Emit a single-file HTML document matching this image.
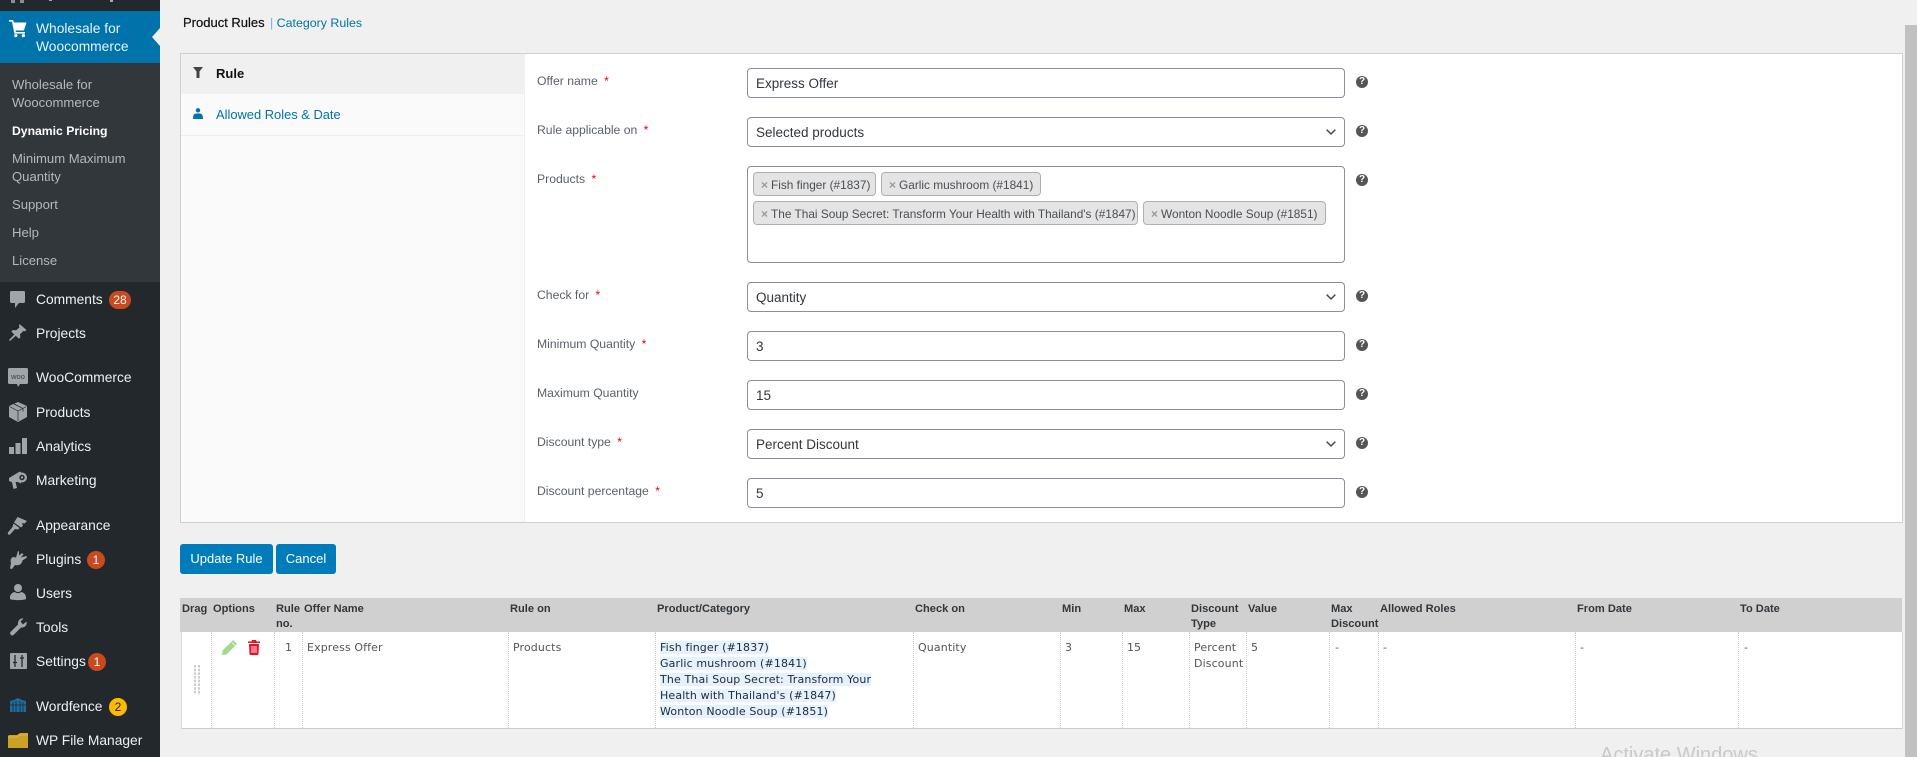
<!DOCTYPE html>
<html><head><meta charset="utf-8"><title>Dynamic Pricing</title>
<style>
html,body{margin:0;padding:0;width:1917px;height:757px;overflow:hidden;background:#f0f0f0}
body{position:relative;font-family:"Liberation Sans",sans-serif;font-size:13px;color:#3c434a}
.a{position:absolute;white-space:nowrap}
.m{position:absolute;left:36px;margin-top:1px;font-size:13.8px;line-height:20px;height:20px;color:#eef0f1;white-space:nowrap}
.s{position:absolute;left:12px;font-size:13.1px;line-height:18px;color:#b4b9be;white-space:nowrap}
svg{position:absolute;overflow:visible}
.b{position:absolute;height:18px;border-radius:9px;color:#fff;font-size:12px;line-height:18px;text-align:center;background:#ca4a1f}
.l{position:absolute;left:537px;font-size:12.2px;line-height:16px;color:#5a6168;white-space:nowrap}
.l i{font-style:normal;color:#e2001a;margin-left:3px}
.f{position:absolute;left:747px;width:596px;height:28px;border:1px solid #87919b;border-radius:4px;background:#fff;font-size:13.5px;line-height:30px;color:#32373c;text-indent:8px}
.h{position:absolute;left:1356px;width:12px;height:12px;border-radius:50%;background:#555;color:#fff;font-size:10px;font-weight:bold;line-height:12px;text-align:center}
.t{position:absolute;height:22px;border:1px solid #b0b0b0;border-radius:4px;background:#e4e4e4;font-size:11.85px;line-height:24px;color:#4a4f55;white-space:nowrap;box-sizing:content-box}
.t b{font-weight:bold;color:#999;margin:0 3px 0 7px;font-size:12px}
.th{position:absolute;top:602px;font-size:11.1px;line-height:15px;font-weight:bold;color:#32373c}
.td{position:absolute;top:640px;font-family:"DejaVu Sans",sans-serif;font-size:11px;line-height:16px;color:#555;white-space:nowrap}
.sep{position:absolute;top:632px;height:96px;width:0;border-left:1px dotted #ccc}
.hl{background:#e3f2fc;color:#1e2a38}
</style></head><body>

<div class="a" style="left:0;top:0;width:160px;height:757px;background:#23282d"></div>
<div class="a" style="left:0;top:63px;width:160px;height:219px;background:#32373c"></div>
<div class="a" style="left:0;top:11px;width:160px;height:52px;background:#0073aa"></div>
<svg style="left:152px;top:28px" width="8" height="18"><path d="M8 0 L0 9 L8 18Z" fill="#f0f0f1"/></svg>

<div class="a" style="left:11px;top:0;width:4px;height:3px;background:#8a8d90"></div>
<div class="a" style="left:20px;top:0;width:4px;height:3px;background:#8a8d90"></div>
<div class="a" style="left:49px;top:0;width:3px;height:1px;background:#aaa"></div>
<div class="a" style="left:110px;top:0;width:3px;height:2px;background:#aaa"></div>

<svg style="left:9px;top:19px" width="18" height="18" viewBox="0 0 18 18"><path d="M0 1h4l1 2.500h12.500l-2.600 8H6.500l.4 1.500H16v1.600H5.400L3 2.600H0z" fill="#fff"/><circle cx="6.800" cy="16.600" r="1.600" fill="#fff"/><circle cx="14.400" cy="16.600" r="1.600" fill="#fff"/></svg>
<div class="m" style="top:18px;color:#e6f2f8">Wholesale for</div>
<div class="m" style="top:36px;color:#e6f2f8">Woocommerce</div>

<div class="s" style="top:76px">Wholesale for</div>
<div class="s" style="top:94px">Woocommerce</div>
<div class="s" style="top:122px;color:#fff;font-weight:bold;font-size:12.2px">Dynamic Pricing</div>
<div class="s" style="top:150px">Minimum Maximum</div>
<div class="s" style="top:168px">Quantity</div>
<div class="s" style="top:196px">Support</div>
<div class="s" style="top:224px">Help</div>
<div class="s" style="top:252px">License</div>

<svg style="left:10px;top:291px" width="15" height="17" viewBox="0 0 15 17"><path d="M1.500 0h12A1.500 1.500 0 0 1 15 1.500v9a1.500 1.500 0 0 1-1.500 1.500H9l-4 5v-5H1.500A1.500 1.500 0 0 1 0 10.500v-9A1.500 1.500 0 0 1 1.500 0z" fill="#a0a5aa"/></svg>
<div class="m" style="top:289px">Comments</div>
<div class="b" style="left:109px;top:291px;width:22px">28</div>

<svg style="left:9px;top:324px" width="18" height="18" viewBox="0 0 18 18"><path d="M10.500 0l7 6-1.600 1.400-1.400-.5-3.500 3.400.4 3-1.600 1.500-3-3.100L1 17l-1-1 5.300-5.500-3-3 1.600-1.500 3 .4L10.500 3.500 10 2z" fill="#a0a5aa"/></svg>
<div class="m" style="top:323px">Projects</div>

<svg style="left:8px;top:368px" width="20" height="20" viewBox="0 0 20 20"><path d="M1.500 0h17A1.500 1.500 0 0 1 20 1.500v13a1.500 1.500 0 0 1-1.500 1.500H12l-2 3-1-3H1.500A1.500 1.500 0 0 1 0 14.500v-13A1.500 1.500 0 0 1 1.500 0z" fill="#a0a5aa"/><text x="10" y="11" font-size="7.500" font-family="Liberation Sans,sans-serif" fill="#3a3f44" text-anchor="middle">woo</text></svg>
<div class="m" style="top:367px">WooCommerce</div>

<svg style="left:9px;top:402px" width="18" height="20" viewBox="0 0 18 20"><path d="M9 0l9 4v11l-9 5-9-5V4z" fill="#a0a5aa"/><path d="M0.500 4.500L9 9l8.500-4.500M5 2l9 4.500v3M9 9v10" stroke="#23282d" stroke-width=".7" fill="none"/></svg>
<div class="m" style="top:402px">Products</div>

<svg style="left:9px;top:438px" width="18" height="16" viewBox="0 0 18 16"><path d="M0 9h5v7H0zM6.500 5h5v11h-5zM13 0h5v16h-5z" fill="#a0a5aa"/></svg>
<div class="m" style="top:436px">Analytics</div>

<svg style="left:9px;top:471px" width="18" height="18" viewBox="0 0 18 18"><path d="M0 7l10-6c2-.8 2 .5 2 .5v11L9 11 6.500 11l1.500 6-3.500 1L3 11.300 0 10z" fill="#a0a5aa"/><circle cx="13" cy="6.500" r="5" fill="#a0a5aa"/><circle cx="13" cy="6.500" r="2.700" fill="#23282d"/><circle cx="13" cy="6.500" r="1.200" fill="#a0a5aa"/></svg>
<div class="m" style="top:470px">Marketing</div>

<svg style="left:8px;top:517px" width="20" height="18" viewBox="0 0 20 18"><path d="M9.500 0L19 4l-2.500 2.500-2.500-.5 1 2.500-2 2-7-5zM5.500 6.500l6 4.500-1.500 1.500L7 12l-5 5.500c-2 1-2.500-1-2-2L4.500 10z" fill="#a0a5aa"/></svg>
<div class="m" style="top:515px">Appearance</div>

<svg style="left:10px;top:551px" width="17" height="18" viewBox="0 0 17 18"><path d="M8 0l1 .5v4L12 2l1.500 1.500-3 3L16.500 5l.5 1.500-4.500 3C12 13 9 15 5 14l-3 4-2-.5 1-5.500C0 9 1 7 3 6l3 .5z" fill="#a0a5aa"/></svg>
<div class="m" style="top:549px">Plugins</div>
<div class="b" style="left:87px;top:551px;width:18px">1</div>

<svg style="left:10px;top:584px" width="16" height="17" viewBox="0 0 16 17"><circle cx="8" cy="4" r="4" fill="#a0a5aa"/><path d="M5 8c-3 .5-5 2.500-5 5.500V15c2 1.500 14 1.500 16 0v-1.500C16 10.500 14 8.500 11 8c-1 1.500-5 1.500-6 0z" fill="#a0a5aa"/></svg>
<div class="m" style="top:583px">Users</div>

<svg style="left:9px;top:618px" width="18" height="18" viewBox="0 0 18 18"><path d="M17.500 3.500c1 3-1.500 6.500-5.500 6L4.500 17c-1.500 1.500-4.500-1-3-3l7.500-7.500C8.500 2.500 11.500 0 14.500 0.500L11.500 3.500 14 6.500z" fill="#a0a5aa"/></svg>
<div class="m" style="top:617px">Tools</div>

<svg style="left:10px;top:653px" width="17" height="16" viewBox="0 0 17 16"><rect width="17" height="16" rx="1" fill="#a0a5aa"/><path d="M5 2v12M12 2v12M3 9.500h4M10 5h4" stroke="#23282d" stroke-width="1.300" fill="none"/></svg>
<div class="m" style="top:651px">Settings</div>
<div class="b" style="left:88px;top:653px;width:18px">1</div>

<svg style="left:10px;top:698px" width="16" height="14" viewBox="0 0 16 14"><path d="M0 3l4-1 4-2 4 2 4 1v11H0z" fill="#1d6d9e"/><path d="M3 4v10M6 3v11M10 3v11M13 4v10M0 7h16" stroke="#23282d" stroke-width=".8"/></svg>
<div class="m" style="top:696px">Wordfence</div>
<div class="b" style="left:109px;top:698px;width:18px;background:#ffb900;color:#23282d">2</div>

<svg style="left:8px;top:733px" width="20" height="15" viewBox="0 0 20 15"><path d="M0 3l1-1h8l3-2h8v15H0z" fill="#c9a227"/><path d="M0 4h9l3-2h8" stroke="#e3c04a" fill="none" stroke-width=".8"/></svg>
<div class="m" style="top:730px">WP File Manager</div>

<div class="a" style="left:183px;top:14px;font-size:13px;line-height:18px;color:#111;-webkit-text-stroke:.2px #111">Product Rules</div>
<div class="a" style="left:270px;top:14px;font-size:12.4px;line-height:18px;color:#0073aa"><span style="color:#72aee6">|</span>&nbsp;Category Rules</div>

<div class="a" style="left:180px;top:53px;width:1723px;height:470px;box-sizing:border-box;border:1px solid #ccd0d4;background:#fff"></div>
<div class="a" style="left:181px;top:54px;width:343px;height:468px;background:#fafafa;border-right:1px solid #eee"></div>
<div class="a" style="left:181px;top:54px;width:343px;height:40px;background:#f0f0f0"></div>
<div class="a" style="left:181px;top:135px;width:343px;height:1px;background:#eee"></div>
<svg style="left:193px;top:67px" width="10" height="11" viewBox="0 0 10 11"><path d="M0 0h10L6.500 4.500V11h-3V4.500z" fill="#444"/></svg>
<div class="a" style="left:216px;top:65px;font-weight:bold;font-size:13px;line-height:18px;color:#111">Rule</div>
<svg style="left:193px;top:108px" width="10" height="11" viewBox="0 0 10 11"><circle cx="5" cy="2.300" r="2.200" fill="#0073aa"/><path d="M0 11Q0 5.500 3 5.500h4Q10 5.500 10 11z" fill="#0073aa"/></svg>
<div class="a" style="left:216px;top:106px;font-size:12.9px;line-height:18px;color:#0073aa">Allowed Roles &amp; Date</div>

<div class="l" style="top:73px">Offer name <i>*</i></div>
<div class="l" style="top:122px">Rule applicable on <i>*</i></div>
<div class="l" style="top:171px">Products <i>*</i></div>
<div class="l" style="top:287px">Check for <i>*</i></div>
<div class="l" style="top:336px">Minimum Quantity <i>*</i></div>
<div class="l" style="top:385px">Maximum Quantity</div>
<div class="l" style="top:434px">Discount type <i>*</i></div>
<div class="l" style="top:483px">Discount percentage <i>*</i></div>

<div class="f" style="top:68px">Express Offer</div>
<div class="f" style="top:117px">Selected products</div>
<div class="f" style="top:166px;height:95px"></div>
<div class="f" style="top:282px">Quantity</div>
<div class="f" style="top:331px">3</div>
<div class="f" style="top:380px">15</div>
<div class="f" style="top:429px">Percent Discount</div>
<div class="f" style="top:478px">5</div>

<svg style="left:1326px;top:129px" width="10" height="7"><path d="M.7.700L5 5l4.300-4.300" stroke="#444b52" stroke-width="1.500" fill="none"/></svg>
<svg style="left:1326px;top:294px" width="10" height="7"><path d="M.7.700L5 5l4.300-4.300" stroke="#444b52" stroke-width="1.500" fill="none"/></svg>
<svg style="left:1326px;top:441px" width="10" height="7"><path d="M.7.700L5 5l4.300-4.300" stroke="#444b52" stroke-width="1.500" fill="none"/></svg>

<div class="t" style="left:753px;top:172px;width:121px"><b>×</b>Fish finger (#1837)</div>
<div class="t" style="left:881px;top:172px;width:158px"><b>×</b>Garlic mushroom (#1841)</div>
<div class="t" style="left:753px;top:201px;width:383px"><b>×</b>The Thai Soup Secret: Transform Your Health with Thailand's (#1847)</div>
<div class="t" style="left:1143px;top:201px;width:181px"><b>×</b>Wonton Noodle Soup (#1851)</div>

<div class="h" style="top:76px">?</div>
<div class="h" style="top:125px">?</div>
<div class="h" style="top:174px">?</div>
<div class="h" style="top:290px">?</div>
<div class="h" style="top:339px">?</div>
<div class="h" style="top:388px">?</div>
<div class="h" style="top:437px">?</div>
<div class="h" style="top:486px">?</div>

<div class="a" style="left:180px;top:544px;width:93px;height:30px;background:#007cba;border-radius:3px;color:#fff;font-size:13px;line-height:30px;text-align:center">Update Rule</div>
<div class="a" style="left:276px;top:544px;width:60px;height:30px;background:#007cba;border-radius:3px;color:#fff;font-size:13px;line-height:30px;text-align:center">Cancel</div>

<div class="a" style="left:180px;top:598px;width:1722px;height:34px;background:#d0d0d0"></div>
<div class="a" style="left:181px;top:632px;width:1720px;height:96px;background:#fff;border-bottom:1px solid #ccc;border-left:1px solid #ddd;border-right:1px solid #ddd"></div>

<div class="sep" style="left:211px"></div><div class="sep" style="left:274px"></div><div class="sep" style="left:302px"></div><div class="sep" style="left:508px"></div><div class="sep" style="left:655px"></div><div class="sep" style="left:913px"></div><div class="sep" style="left:1060px"></div><div class="sep" style="left:1122px"></div><div class="sep" style="left:1189px"></div><div class="sep" style="left:1246px"></div><div class="sep" style="left:1329px"></div><div class="sep" style="left:1378px"></div><div class="sep" style="left:1575px"></div><div class="sep" style="left:1738px"></div>

<div class="th" style="left:182px">Drag</div>
<div class="th" style="left:213px">Options</div>
<div class="th" style="left:276px">Rule<br>no.</div>
<div class="th" style="left:304px">Offer Name</div>
<div class="th" style="left:510px">Rule on</div>
<div class="th" style="left:657px">Product/Category</div>
<div class="th" style="left:915px">Check on</div>
<div class="th" style="left:1062px">Min</div>
<div class="th" style="left:1124px">Max</div>
<div class="th" style="left:1191px">Discount<br>Type</div>
<div class="th" style="left:1248px">Value</div>
<div class="th" style="left:1331px">Max<br>Discount</div>
<div class="th" style="left:1380px">Allowed Roles</div>
<div class="th" style="left:1577px">From Date</div>
<div class="th" style="left:1740px">To Date</div>

<svg style="left:194px;top:665px" width="6" height="30"><path d="M1 0V30M5 0V30" stroke="#ccc" stroke-width="2" stroke-dasharray="2.500 1.200" fill="none"/></svg>
<svg style="left:222px;top:640px" width="15" height="15" viewBox="0 0 15 15"><path d="M11 0l4 4L4.500 14.500 0 15l.5-4.500z" fill="#a6d98f"/><path d="M9.500 2l3.500 3.500" stroke="#fff" stroke-width=".7"/></svg>
<svg style="left:248px;top:640px" width="12" height="15" viewBox="0 0 12 15"><path d="M4 0h4l.5 1.500H12V3H0V1.500h3.500zM1 4h10l-.5 10q0 1-1 1h-7q-1 0-1-1z" fill="#e8112d"/><path d="M4 6v7M6 6v7M8 6v7" stroke="#fff" stroke-width=".9"/></svg>

<div class="td" style="left:285px;">1</div>
<div class="td" style="left:307px;letter-spacing:.12px">Express Offer</div>
<div class="td" style="left:513px;letter-spacing:.12px">Products</div>
<div class="td" style="left:660px;color:#1e2a38;letter-spacing:.14px"><span class="hl">Fish finger (#1837)</span><br><span class="hl">Garlic mushroom (#1841)</span><br><span class="hl">The Thai Soup Secret: Transform Your</span><br><span class="hl">Health with Thailand's (#1847)</span><br><span class="hl">Wonton Noodle Soup (#1851)</span></div>
<div class="td" style="left:918px;letter-spacing:.12px">Quantity</div>
<div class="td" style="left:1065px">3</div>
<div class="td" style="left:1127px">15</div>
<div class="td" style="left:1194px;letter-spacing:.12px">Percent<br>Discount</div>
<div class="td" style="left:1251px">5</div>
<div class="td" style="left:1335px">-</div>
<div class="td" style="left:1383px">-</div>
<div class="td" style="left:1580px">-</div>
<div class="td" style="left:1744px">-</div>

<div class="a" style="left:1905px;top:25px;width:12px;height:732px;background:#c1c1c1"></div>
<div class="a" style="left:1600px;top:742px;font-size:20px;line-height:26px;color:#c9c9c9">Activate Windows</div>
</body></html>
